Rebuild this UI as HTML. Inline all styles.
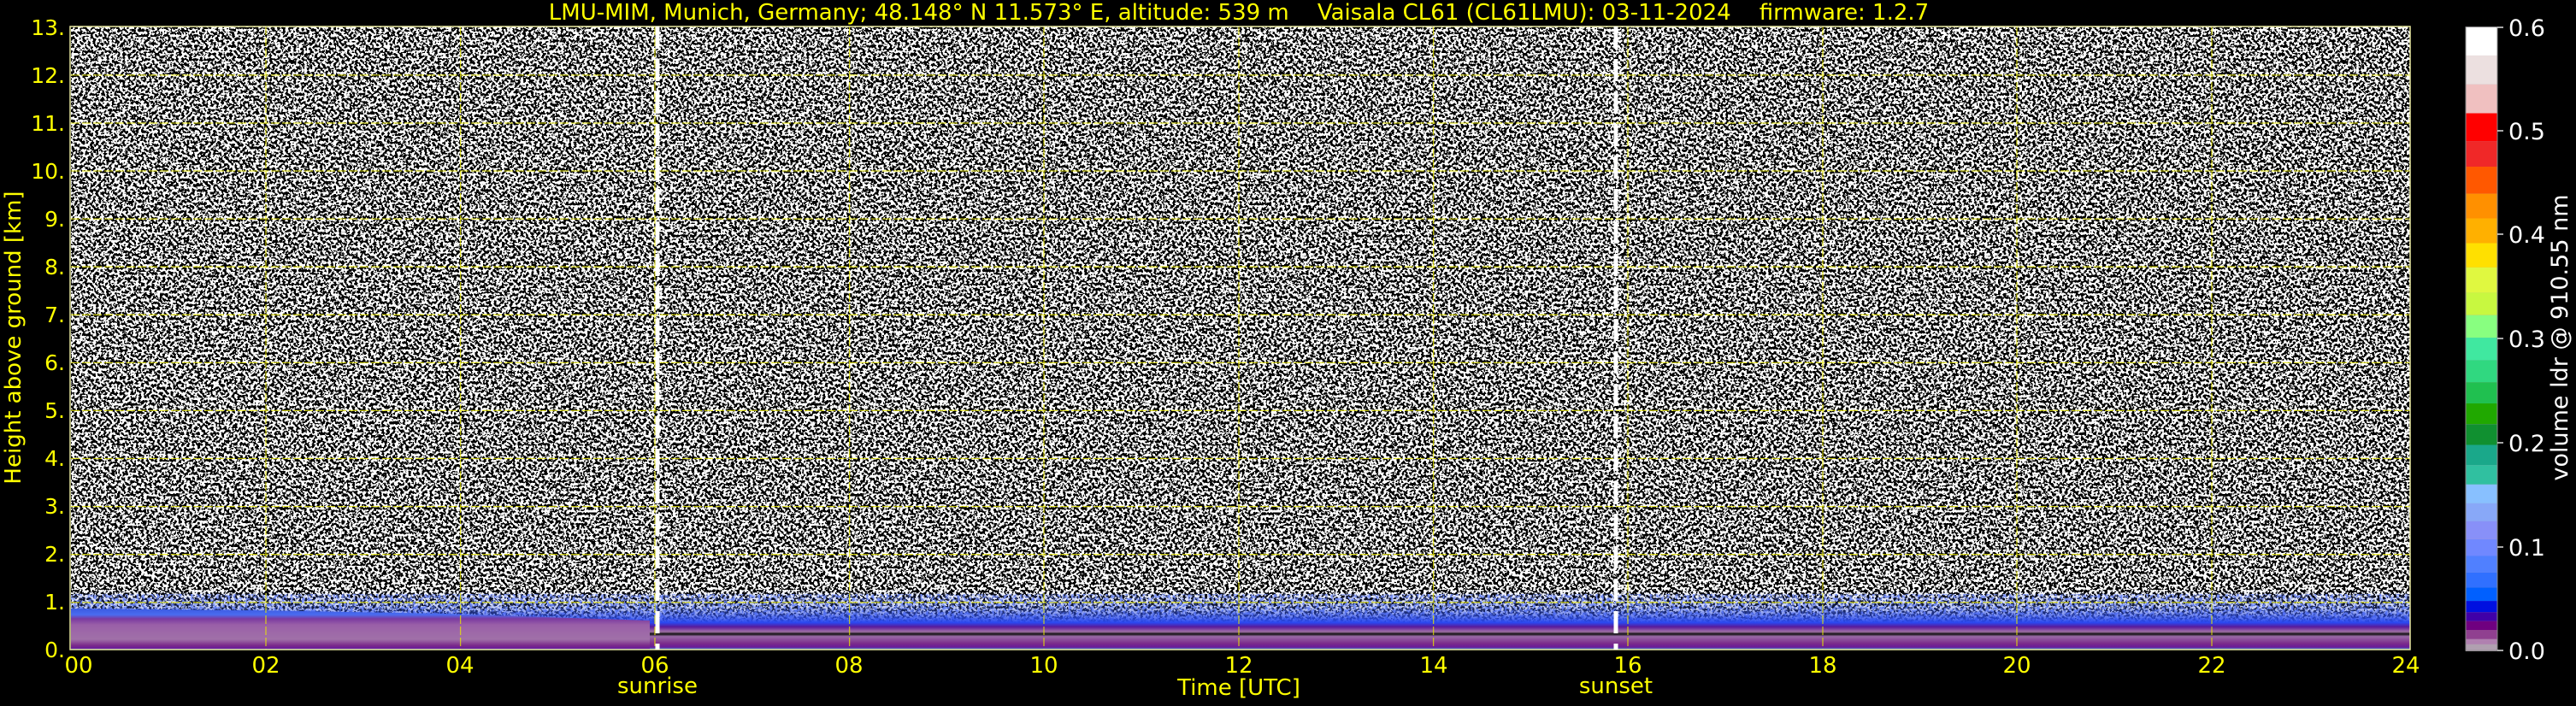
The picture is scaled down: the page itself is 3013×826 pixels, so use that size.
<!DOCTYPE html>
<html><head><meta charset="utf-8"><style>
html,body{margin:0;padding:0;background:#000;width:3013px;height:826px;overflow:hidden}
svg{display:block}
text{font-family:"DejaVu Sans","Liberation Sans",sans-serif;white-space:pre}
</style></head><body>
<svg width="3013" height="826" viewBox="0 0 3013 826" xmlns="http://www.w3.org/2000/svg">
<defs>
<filter id="nz" x="0" y="0" width="100%" height="100%" filterUnits="objectBoundingBox">
<feTurbulence type="fractalNoise" baseFrequency="0.32" numOctaves="2" seed="7" result="t"/>
<feColorMatrix in="t" type="matrix" values="1 0 0 0 0  1 0 0 0 0  1 0 0 0 0  0 0 0 0 1" result="g"/>
<feComponentTransfer in="g" result="bw"><feFuncR type="discrete" tableValues="0 1"/><feFuncG type="discrete" tableValues="0 1"/><feFuncB type="discrete" tableValues="0 1"/></feComponentTransfer>
</filter>
<filter id="nz2" x="0" y="0" width="100%" height="100%" filterUnits="objectBoundingBox">
<feTurbulence type="fractalNoise" baseFrequency="0.3" numOctaves="2" seed="3" result="t"/>
<feColorMatrix in="t" type="matrix" values="0 0 0 0 0.2  0 0 0 0 0.3  0 0 0 0 1  4 0 0 0 -1.8"/>
</filter>
<linearGradient id="bl" x1="0" y1="0" x2="0" y2="1">
<stop offset="0" stop-color="#3050d0" stop-opacity="0"/>
<stop offset="0.3" stop-color="#3a5ae0" stop-opacity="0.3"/>
<stop offset="0.55" stop-color="#2a48f0"/>
<stop offset="0.62" stop-color="#5a1a9a"/>
<stop offset="0.7" stop-color="#a070a8"/>
<stop offset="0.74" stop-color="#111"/>
<stop offset="0.78" stop-color="#9a6aa8"/>
<stop offset="0.9" stop-color="#7a2a8a"/>
<stop offset="0.96" stop-color="#6a1a9a"/>
<stop offset="1" stop-color="#40a0d0"/>
</linearGradient>
<linearGradient id="bl0" x1="0" y1="0" x2="0" y2="1">
<stop offset="0" stop-color="#3a5ae0"/>
<stop offset="0.15" stop-color="#4a6cf0"/>
<stop offset="0.25" stop-color="#7a3aa0"/>
<stop offset="0.4" stop-color="#9a60a8"/>
<stop offset="0.75" stop-color="#a070a8"/>
<stop offset="0.9" stop-color="#7a2a8a"/>
<stop offset="0.97" stop-color="#6a1a9a"/>
<stop offset="1" stop-color="#40a0d0"/>
</linearGradient>
</defs>
<rect x="83" y="31" width="2736" height="729" fill="#777"/>
<rect x="83" y="31" width="2736" height="729" filter="url(#nz)"/>
<!-- boundary layer -->
<rect x="83" y="695" width="2736" height="35" filter="url(#nz2)"/>
<rect x="83" y="690" width="2736" height="70" fill="url(#bl)"/>
<polygon points="83,712 300,714 520,718 700,724 760,726 760,760 83,760" fill="url(#bl0)"/>
<!-- grid -->
<g stroke="#e8e800" stroke-width="1.3" opacity="0.75" stroke-dasharray="10,3">
<line x1="83" x2="2819" y1="87.9" y2="87.9"/><line x1="83" x2="2819" y1="144" y2="144"/><line x1="83" x2="2819" y1="200" y2="200"/><line x1="83" x2="2819" y1="256.1" y2="256.1"/><line x1="83" x2="2819" y1="312.2" y2="312.2"/><line x1="83" x2="2819" y1="368.3" y2="368.3"/><line x1="83" x2="2819" y1="424.4" y2="424.4"/><line x1="83" x2="2819" y1="480.4" y2="480.4"/><line x1="83" x2="2819" y1="536.5" y2="536.5"/><line x1="83" x2="2819" y1="592.6" y2="592.6"/><line x1="83" x2="2819" y1="648.7" y2="648.7"/><line x1="83" x2="2819" y1="704.8" y2="704.8"/>
<line y1="31" y2="760" x1="311" x2="311"/><line y1="31" y2="760" x1="538.6" x2="538.6"/><line y1="31" y2="760" x1="766" x2="766"/><line y1="31" y2="760" x1="993.6" x2="993.6"/><line y1="31" y2="760" x1="1221" x2="1221"/><line y1="31" y2="760" x1="1449" x2="1449"/><line y1="31" y2="760" x1="1676.6" x2="1676.6"/><line y1="31" y2="760" x1="1904" x2="1904"/><line y1="31" y2="760" x1="2132" x2="2132"/><line y1="31" y2="760" x1="2359" x2="2359"/><line y1="31" y2="760" x1="2587" x2="2587"/>
</g>
<rect x="82" y="31" width="2737" height="729" fill="none" stroke="#e8e8a0" stroke-width="1.5"/>
<g stroke="#fff" stroke-width="5" stroke-dasharray="26,12">
<line x1="769" x2="769" y1="31" y2="760"/><line x1="1890" x2="1890" y1="31" y2="760"/>
</g>
<!-- labels -->
<g fill="#ffff00" font-size="26">
<text x="1449" y="23" text-anchor="middle" xml:space="preserve">LMU-MIM, Munich, Germany; 48.148° N 11.573° E, altitude: 539 m    Vaisala CL61 (CL61LMU): 03-11-2024    firmware: 1.2.7</text>
<g text-anchor="end" font-size="25">
<text x="76" y="41">13.</text><text x="76" y="97">12.</text><text x="76" y="153">11.</text><text x="76" y="209">10.</text><text x="76" y="265">9.</text><text x="76" y="321">8.</text><text x="76" y="377">7.</text><text x="76" y="433">6.</text><text x="76" y="489">5.</text><text x="76" y="545">4.</text><text x="76" y="601">3.</text><text x="76" y="657">2.</text><text x="76" y="713">1.</text><text x="76" y="769">0.</text>
</g>
<g text-anchor="middle">
<text x="92" y="787">00</text><text x="311" y="787">02</text><text x="538" y="787">04</text><text x="766" y="787">06</text><text x="993" y="787">08</text><text x="1221" y="787">10</text><text x="1449" y="787">12</text><text x="1677" y="787">14</text><text x="1904" y="787">16</text><text x="2132" y="787">18</text><text x="2359" y="787">20</text><text x="2587" y="787">22</text><text x="2814" y="787">24</text>
<text x="769" y="811">sunrise</text><text x="1890" y="811">sunset</text>
<text x="1449" y="813">Time [UTC]</text>
</g>
<text transform="translate(24,395) rotate(-90)" text-anchor="middle">Height above ground [km]</text>
</g>
<!-- colorbar -->
<g>
<rect x="2884" y="31" width="37" height="731" fill="#b0a0b0"/>
<rect x="2884" y="31.6" width="37" height="33.6" fill="#ffffff"/>
<rect x="2884" y="64.8" width="37" height="34" fill="#ece0e0"/>
<rect x="2884" y="98.8" width="37" height="33.7" fill="#f0c0c0"/>
<rect x="2884" y="132.5" width="37" height="32.6" fill="#ff0000"/>
<rect x="2884" y="165.1" width="37" height="30" fill="#f02828"/>
<rect x="2884" y="195" width="37" height="31.6" fill="#ff5800"/>
<rect x="2884" y="226.6" width="37" height="29" fill="#ff9000"/>
<rect x="2884" y="255.5" width="37" height="29" fill="#ffb000"/>
<rect x="2884" y="284.5" width="37" height="28.4" fill="#ffe000"/>
<rect x="2884" y="312.9" width="37" height="29.5" fill="#e0f840"/>
<rect x="2884" y="342.4" width="37" height="26.3" fill="#c8f840"/>
<rect x="2884" y="368.8" width="37" height="26.3" fill="#88ff80"/>
<rect x="2884" y="395.1" width="37" height="26.3" fill="#40e8a0"/>
<rect x="2884" y="421.4" width="37" height="25.8" fill="#30d880"/>
<rect x="2884" y="447.2" width="37" height="24.8" fill="#20c050"/>
<rect x="2884" y="472" width="37" height="24.2" fill="#20a800"/>
<rect x="2884" y="496.3" width="37" height="24.2" fill="#109030"/>
<rect x="2884" y="520.5" width="37" height="23.7" fill="#1aa88a"/>
<rect x="2884" y="544.2" width="37" height="22.6" fill="#30c0a0"/>
<rect x="2884" y="566.8" width="37" height="22.1" fill="#88c0ff"/>
<rect x="2884" y="588.9" width="37" height="21" fill="#88a8f8"/>
<rect x="2884" y="609.9" width="37" height="21" fill="#8890f8"/>
<rect x="2884" y="631" width="37" height="19.5" fill="#7088ff"/>
<rect x="2884" y="650.4" width="37" height="19.5" fill="#5080ff"/>
<rect x="2884" y="669.9" width="37" height="17.4" fill="#3070ff"/>
<rect x="2884" y="687.3" width="37" height="15.8" fill="#0060ff"/>
<rect x="2884" y="703.1" width="37" height="13.2" fill="#0010e0"/>
<rect x="2884" y="716.3" width="37" height="10.5" fill="#4000a8"/>
<rect x="2884" y="726.8" width="37" height="10.5" fill="#700080"/>
<rect x="2884" y="737.3" width="37" height="10.5" fill="#904090"/>
<rect x="2884" y="747.8" width="37" height="6" fill="#b080b0"/>
<rect x="2884" y="31.6" width="37" height="729.6" fill="none" stroke="#888" stroke-width="1"/>
<g stroke="#ddd" stroke-width="1.5"><line x1="2921" x2="2928" y1="32" y2="32"/><line x1="2921" x2="2928" y1="153" y2="153"/><line x1="2921" x2="2928" y1="274" y2="274"/><line x1="2921" x2="2928" y1="396" y2="396"/><line x1="2921" x2="2928" y1="518" y2="518"/><line x1="2921" x2="2928" y1="640" y2="640"/><line x1="2921" x2="2928" y1="761" y2="761"/></g>
<g fill="#fff" font-size="27">
<text x="2934" y="42">0.6</text><text x="2934" y="163">0.5</text><text x="2934" y="284">0.4</text><text x="2934" y="406">0.3</text><text x="2934" y="528">0.2</text><text x="2934" y="650">0.1</text><text x="2934" y="771">0.0</text>
<text transform="translate(3003,395) rotate(-90)" text-anchor="middle" font-size="27">volume ldr @ 910.55 nm</text>
</g>
</g>
</svg>
</body></html>
